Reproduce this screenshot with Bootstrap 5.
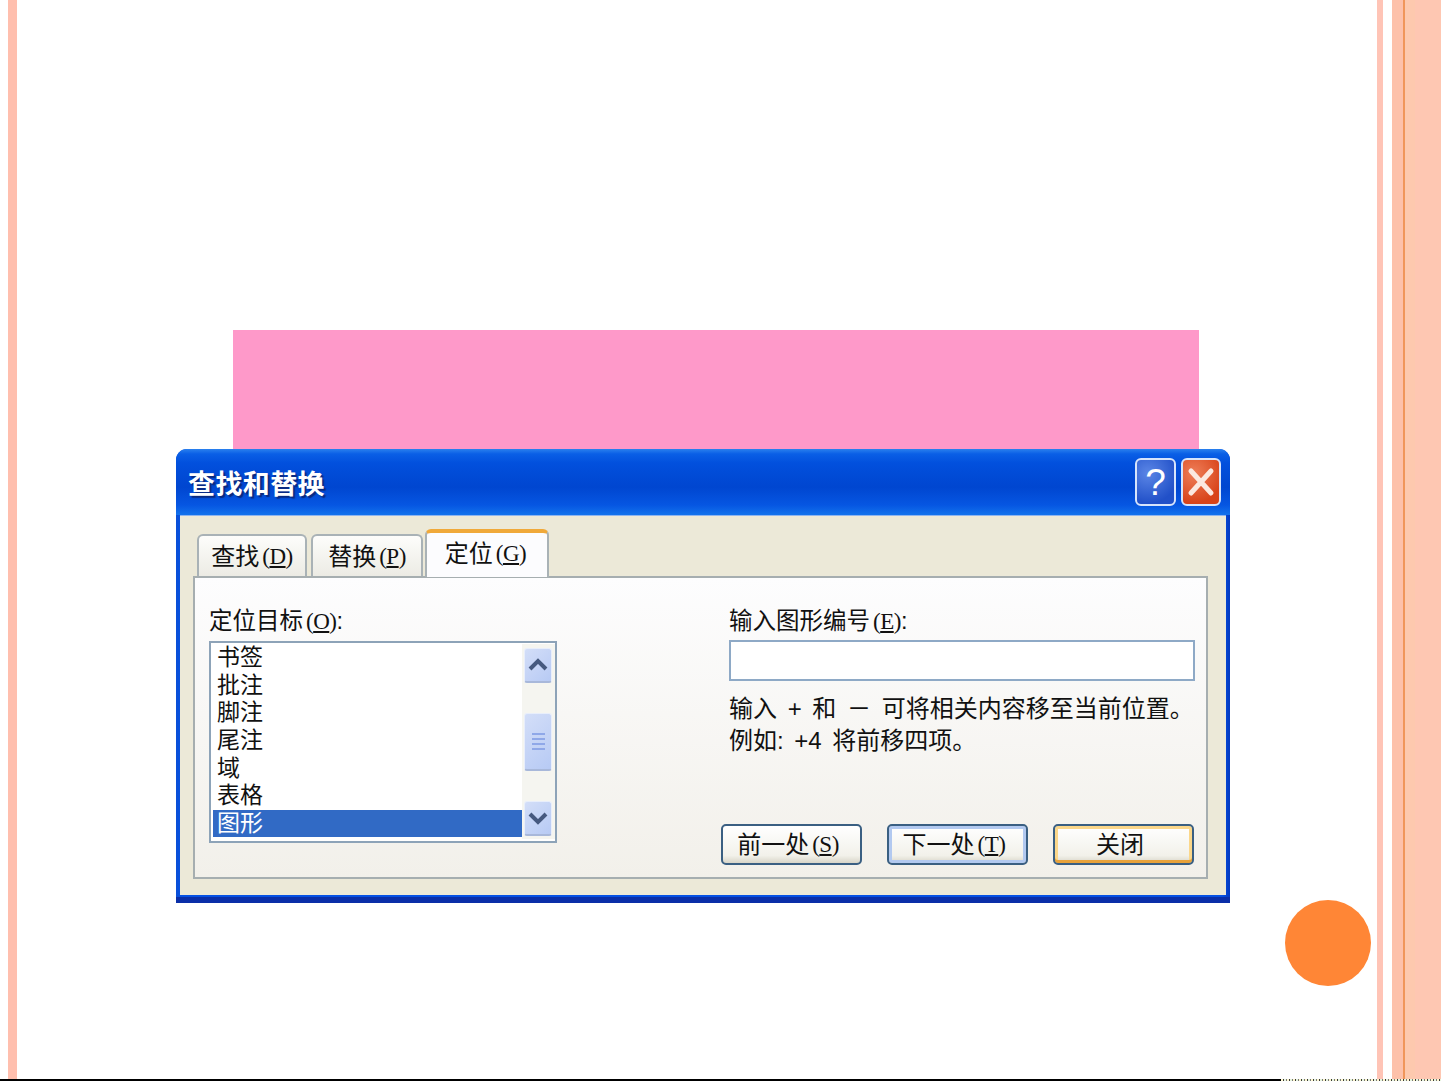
<!DOCTYPE html>
<html lang="zh">
<head>
<meta charset="utf-8">
<title>查找和替换</title>
<link href="https://cdn.jsdelivr.net/npm/bootstrap@5.3.0/dist/css/bootstrap.min.css" rel="stylesheet">
<style>
html,body{margin:0;background:#fff;}
body{overflow:hidden;font-family:"Liberation Sans","Noto Sans CJK SC",sans-serif;color:#111;}
.slide-page{width:1441px;height:1081px;position:relative;border-bottom:2px solid #000;}
.noise-strip{position:absolute;left:1281px;right:0;bottom:-2px;height:2px;background:repeating-linear-gradient(90deg,#fff8d0 0 2px,#3a3a3a 2px 3px,#e8f5e0 3px 5px,#777 5px 6px);}
.stripe-left{width:9px;margin-left:8px;background:#ffbfae;flex:none;}
.slide-main{flex:1;min-width:0;padding-left:159px;padding-top:330px;}
.stripes-right{width:64px;flex:none;display:flex;}
.st-a{width:6px;background:#ffc4b6;}
.st-b{width:9px;background:#fff;}
.st-c{width:11px;background:#fdc1aa;}
.st-d{width:2px;background:#f0965a;}
.st-e{width:10px;background:#fdc9ae;}
.st-f{flex:1;background:#fec7b2;}
.pink-block{width:966px;height:119px;background:#fe99c9;margin-left:57px;}
.xp-window{width:1054px;height:454px;background:linear-gradient(90deg,#0a4fd6,#0551e4 6px,#0551e4 1046px,#0339c0);border-radius:11px 11px 0 0;padding:0 4px 8px 4px;box-shadow:inset 0 -6px 0 #0a2fa8;}
.xp-title{height:66px;padding:0 9px 0 12px;border-radius:11px 11px 0 0;margin:0 -4px;background:linear-gradient(180deg,#2a80ee 0,#0a5fe6 5px,#0250dd 14px,#0046d0 38px,#0656e2 56px,#1272ec 66px);}
.xp-heading{font-size:27px;font-weight:700;color:#fff;text-shadow:2px 2px 1px #0a2a80;letter-spacing:.4px;line-height:1;margin:0;font-family:"Noto Sans CJK SC",sans-serif;}
.xp-tool{width:41px;height:48px;border:2px solid #d7e4fb;border-radius:6px;color:#fff;font-size:37px;line-height:1;display:flex;align-items:center;justify-content:center;margin-right:5px;}
.tool-help{background:radial-gradient(circle at 30% 30%,#5b86e6,#2150c8 75%);}
.tool-close{width:40px;margin-right:0;background:radial-gradient(circle at 30% 30%,#ee7e58,#d8431a 75%);}
.xp-client{height:380px;background:#ece9d8;padding:13px 18px 17px 13px;border-top:1px solid #8fb5ef;}
.tab-row{height:47px;padding-left:4px;align-items:flex-end;}
.xp-tab{height:42px;font-size:24px;line-height:26px;border:2px solid #a9b2b6;border-bottom:0;border-radius:6px 6px 0 0;background:linear-gradient(180deg,#fdfdfb,#ecebe4);display:flex;align-items:center;justify-content:center;margin-right:4px;padding-top:2px;}
.tab-one{width:110px;}
.tab-two{width:112px;margin-right:2px;}
.tab-active{width:124px;height:48px;margin:0 0 -1px;background:#fcfcfe;border-color:#a9b2b6;border-top:4px solid #f0a93a;position:relative;z-index:1;padding:0 3px 3px 0;}
.acc{font-family:"Liberation Serif",serif;font-size:23px;margin-left:3px;letter-spacing:-.5px;}
.acc u{text-underline-offset:2px;}
.xp-panel{height:303px;border:2px solid #a6aeb0;background:linear-gradient(180deg,#fdfdfe,#f2f0ea);padding:29px 10px 0 14px;}
.xp-label{font-size:23.5px;line-height:26px;height:34px;padding-top:1px;white-space:nowrap;}
.col-target{width:348px;flex:none;}
.col-input{width:474px;margin-left:164px;flex:none;}
.xp-listbox{height:202px;width:348px;border:2px solid #8da3b8;background:#fff;padding:1px 0 2px 2px;}
.list-rows{flex:1;min-width:0;}
.list-entry{height:27.7px;font-size:23px;line-height:27px;padding-left:4px;white-space:nowrap;}
.list-pick{background:#316ac5;color:#fff;height:27px;}
.scroll-track{width:33px;background:#f5f5f0;padding:4px 3px 0 2px;flex:none;}
.scroll-btn{height:35px;width:28px;background:linear-gradient(135deg,#d3def8,#b7caf4);border-radius:3px;border:1px solid #e8eefb;border-bottom:2px solid #a8b8da;display:flex;align-items:center;justify-content:center;}
.scroll-thumb{height:58px;margin:30px 0 30px;}
.input-holder{padding-left:8px;}
.xp-input{height:41px;width:466px;border:2px solid #8ea9c6;background:#fff;margin-top:-1px;}
.xp-hint{font-size:24px;line-height:32px;margin:12px 0 0;padding-left:8px;white-space:nowrap;word-spacing:4px;}
.btn-row{margin-top:67px;gap:25px;}
.xp-btn{width:141px;height:41px;padding:1px 7px 0 0;font-size:24px;line-height:26px;color:#111;border:2px solid #3a5f82;border-radius:5px;background:linear-gradient(180deg,#fff,#f2f1ea 80%,#d8d5c8);display:flex;align-items:center;justify-content:center;}
.btn-blue{box-shadow:inset 0 0 0 3px #b2c9f0;}
.btn-gold{box-shadow:inset 0 -3px 0 0 #e8a23a,inset 0 0 0 3px #fbd78a;}
.orange-dot{position:absolute;left:1285px;top:900px;width:86px;height:86px;border-radius:50%;background:#ff8636;}
</style>
</head>
<body>
<div class="slide-page d-flex">
  <div class="stripe-left"></div>
  <main class="slide-main">
    <div class="pink-block"></div>
    <section class="xp-window">
      <header class="xp-title d-flex align-items-center">
        <h1 class="xp-heading flex-grow-1">查找和替换</h1>
        <div class="xp-tool tool-help">?</div>
        <div class="xp-tool tool-close"><svg width="28" height="30" viewBox="0 0 28 30"><path d="M4 4 24 26M24 4 4 26" stroke="#fbe8e0" stroke-width="5" stroke-linecap="round" fill="none"/></svg></div>
      </header>
      <div class="xp-client">
        <div class="tab-row d-flex">
          <div class="xp-tab tab-one">查找<span class="acc">(<u>D</u>)</span></div>
          <div class="xp-tab tab-two">替换<span class="acc">(<u>P</u>)</span></div>
          <div class="xp-tab tab-active">定位<span class="acc">(<u>G</u>)</span></div>
        </div>
        <div class="xp-panel d-flex">
          <div class="col-target">
            <div class="xp-label">定位目标<span class="acc">(<u>O</u>)</span>:</div>
            <div class="xp-listbox d-flex">
              <div class="list-rows">
                <div class="list-entry">书签</div>
                <div class="list-entry">批注</div>
                <div class="list-entry">脚注</div>
                <div class="list-entry">尾注</div>
                <div class="list-entry">域</div>
                <div class="list-entry">表格</div>
                <div class="list-entry list-pick">图形</div>
              </div>
              <div class="scroll-track">
                <div class="scroll-btn"><svg width="20" height="14" viewBox="0 0 20 14"><path d="M2 11 10 3l8 8" stroke="#46597f" stroke-width="4" fill="none"/></svg></div>
                <div class="scroll-btn scroll-thumb"><svg width="13" height="20" viewBox="0 0 13 20"><path d="M0 2h13M0 7h13M0 12h13M0 17h13" stroke="#8fa8e8" stroke-width="2" fill="none"/></svg></div>
                <div class="scroll-btn"><svg width="20" height="14" viewBox="0 0 20 14"><path d="M2 3l8 8 8-8" stroke="#46597f" stroke-width="4" fill="none"/></svg></div>
              </div>
            </div>
          </div>
          <div class="col-input">
            <div class="xp-label input-holder">输入图形编号<span class="acc">(<u>E</u>)</span>:</div>
            <div class="input-holder"><div class="xp-input"></div></div>
            <p class="xp-hint">输入 + 和 － 可将相关内容移至当前位置。<br>例如: +4 将前移四项。</p>
            <div class="btn-row d-flex">
              <button type="button" class="btn xp-btn">前一处<span class="acc">(<u>S</u>)</span></button>
              <button type="button" class="btn xp-btn btn-blue">下一处<span class="acc">(<u>T</u>)</span></button>
              <button type="button" class="btn xp-btn btn-gold">关闭</button>
            </div>
          </div>
        </div>
      </div>
    </section>
  </main>
  <div class="stripes-right">
    <div class="st-a"></div><div class="st-b"></div><div class="st-c"></div><div class="st-d"></div><div class="st-e"></div><div class="st-f"></div>
  </div>
  <div class="orange-dot"></div>
  <div class="noise-strip"></div>
</div>
<script src="https://cdn.jsdelivr.net/npm/bootstrap@5.3.0/dist/js/bootstrap.bundle.min.js"></script>
</body>
</html>
